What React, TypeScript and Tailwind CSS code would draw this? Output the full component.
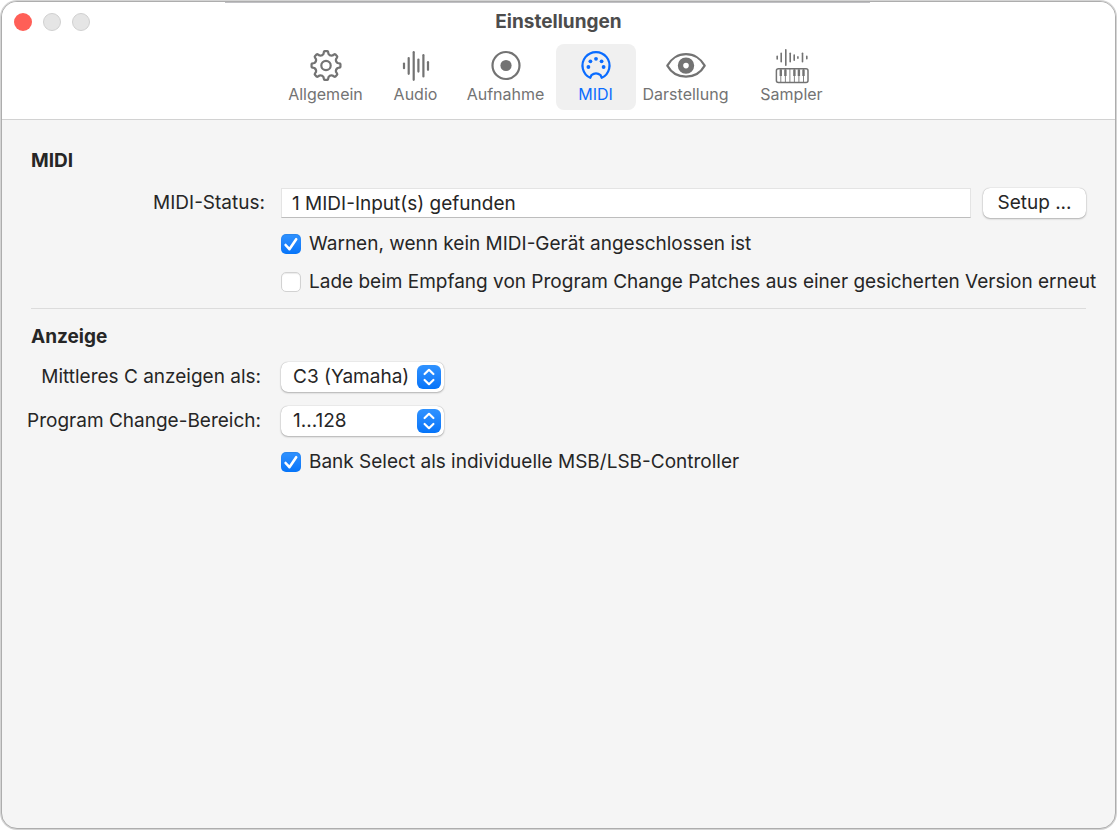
import type { ReactNode } from 'react'

// outline of the gear: eight teeth around (20, 17.5)
function gearPath() {
  const point = (radius: number, deg: number) => {
    const a = ((deg - 90) * Math.PI) / 180
    return `${(20 + radius * Math.cos(a)).toFixed(2)} ${(17.5 + radius * Math.sin(a)).toFixed(2)}`
  }
  let d = ''
  for (let i = 0; i < 8; i++) {
    const deg = i * 45
    d += `${i === 0 ? 'M' : 'L'}${point(11.9, deg - 12)} L${point(13.6, deg - 9)} Q${point(14.5, deg - 8)} ${point(14.5, deg - 5)} `
    d += `L${point(14.5, deg + 5)} Q${point(14.5, deg + 8)} ${point(13.6, deg + 9)} L${point(11.9, deg + 12)} `
    d += `Q${point(10.2, deg + 22.5)} ${point(11.9, deg + 33)} `
  }
  return d + 'Z'
}

const audioBars = [
  [8, 15.6, 20.2],
  [12.7, 10, 25.8],
  [17.7, 4.2, 31.8],
  [22.4, 11.6, 23.6],
  [27.4, 7.2, 28.4],
  [32, 14.2, 21.8],
]

const samplerBars = [
  [5.2, 8.4, 11],
  [9.2, 5.4, 13.8],
  [13.8, 1.8, 17.2],
  [18.2, 5.2, 13.8],
  [22.2, 7, 12.2],
  [25.9, 8.9, 10.2],
  [30.5, 5.2, 13.8],
  [34.8, 8.4, 10.8],
]

function Icon({ children }: { children: ReactNode }) {
  return (
    <svg viewBox="0 0 40 36" className="w-10 h-9" fill="none" stroke="currentColor" strokeWidth="2.2" strokeLinecap="round" strokeLinejoin="round" aria-hidden="true">
      {children}
    </svg>
  )
}

const tabs = [
  {
    label: 'Allgemein',
    icon: (
      <Icon>
        <path d={gearPath()} />
        <circle cx="20" cy="17.5" r="4.7" />
      </Icon>
    ),
  },
  {
    label: 'Audio',
    icon: (
      <Icon>
        {audioBars.map(([x, top, bottom]) => (
          <path key={x} d={`M${x} ${top}V${bottom}`} />
        ))}
      </Icon>
    ),
  },
  {
    label: 'Aufnahme',
    icon: (
      <Icon>
        <circle cx="20" cy="17.5" r="13.5" />
        <circle cx="20" cy="17.5" r="5.6" fill="currentColor" stroke="none" />
      </Icon>
    ),
  },
  {
    label: 'MIDI',
    active: true,
    icon: (
      <Icon>
        <path d="M14.3 29.8A13.5 13.5 0 1 1 25.7 29.8L24.6 27.2Q20 23.4 15.4 27.2Z" />
        <g fill="currentColor" stroke="none">
          <circle cx="12.4" cy="19" r="1.9" />
          <circle cx="14.4" cy="13.3" r="1.9" />
          <circle cx="20" cy="10.8" r="1.9" />
          <circle cx="25.6" cy="13.3" r="1.9" />
          <circle cx="27.6" cy="19" r="1.9" />
        </g>
      </Icon>
    ),
  },
  {
    label: 'Darstellung',
    icon: (
      <Icon>
        <path d="M1.3 17.6C5 10.8 12 6.2 20 6.2S35 10.8 38.7 17.6C35 24.2 28 28.6 20 28.6S5 24.2 1.3 17.6Z" />
        <circle cx="20" cy="17.6" r="5.5" strokeWidth="5.4" />
      </Icon>
    ),
  },
  {
    label: 'Sampler',
    spaced: true,
    icon: (
      <Icon>
        {samplerBars.map(([x, top, bottom]) => (
          <path key={x} d={`M${x} ${top}V${bottom}`} strokeWidth="1.6" />
        ))}
        <rect x="4.4" y="20.8" width="31.6" height="13.6" rx="2" strokeWidth="1.5" />
        <path d="M8.8 21V34M13.4 21V34M17.9 21V34M22.4 21V34M26.9 21V34M31.5 21V34" strokeWidth="0.9" />
        <path d="M8.8 21.5V28M13.4 21.5V28M22.4 21.5V28M26.9 21.5V28M31.5 21.5V28" strokeWidth="2.4" strokeLinecap="butt" />
      </Icon>
    ),
  },
]

function Checkbox({ id, label, checked }: { id: string; label: string; checked?: boolean }) {
  return (
    <div className="flex items-center gap-2">
      <span className="relative flex shrink-0">
        <input
          id={id}
          type="checkbox"
          defaultChecked={checked}
          className="peer appearance-none size-5 rounded-[5px] bg-white border border-[#d2d2d2] shadow-[inset_0_1px_1px_rgba(0,0,0,0.08)] checked:border-0 checked:bg-gradient-to-b checked:from-[#2f92ff] checked:to-[#0474f9]"
        />
        <svg viewBox="0 0 20 20" className="absolute inset-0 size-5 pointer-events-none opacity-0 peer-checked:opacity-100" fill="none" stroke="white" strokeWidth="2.6" strokeLinecap="round" strokeLinejoin="round" aria-hidden="true">
          <path d="M4.6 11L8.4 15.2L15.2 5.2" />
        </svg>
      </span>
      <label htmlFor={id}>{label}</label>
    </div>
  )
}

function Select({ id, options }: { id: string; options: string[] }) {
  return (
    <div className="relative w-[163px]">
      <select id={id} className="appearance-none block w-full h-[30px] pl-3 pr-8 rounded-[7px] bg-white shadow-[0_0_1px_rgba(0,0,0,0.35),0_1px_2px_rgba(0,0,0,0.25)]">
        {options.map((option) => (
          <option key={option}>{option}</option>
        ))}
      </select>
      <svg viewBox="0 0 24 24" className="absolute right-[3px] top-[3px] size-6 pointer-events-none rounded-md bg-gradient-to-b from-[#2f92ff] to-[#0474f9]" fill="none" stroke="white" strokeWidth="2.2" strokeLinecap="round" strokeLinejoin="round" aria-hidden="true">
        <path d="M7.6 9L12 4.8L16.4 9M7.6 15L12 19.2L16.4 15" />
      </svg>
    </div>
  )
}

export default function App() {
  return (
    <div className="min-h-screen flex bg-white font-['Inter',sans-serif] text-[19px] leading-6 text-[#262626]">
      <div className="flex-1 flex flex-col m-px rounded-2xl border border-[#adadad] ring-1 ring-[#d4d4d4] bg-[#f5f5f5] overflow-hidden">
        <header className="bg-white border-b border-[#d2d2d2]">
          <div className="h-px ml-[20%] w-[58%] bg-[#c0c0c4]" />
          <div className="h-[38px] grid grid-cols-[1fr_auto_1fr] items-center px-3">
            <div className="flex gap-[11px]">
              <button aria-label="Schließen" className="size-[18px] rounded-full bg-[#ff5f57]" />
              <button aria-label="Minimieren" className="size-[18px] rounded-full bg-[#e5e5e5] border border-[#d0d0d0]" />
              <button aria-label="Zoomen" className="size-[18px] rounded-full bg-[#e5e5e5] border border-[#d0d0d0]" />
            </div>
            <h1 className="font-bold text-[#4c4c4c]">Einstellungen</h1>
          </div>
          <nav className="flex justify-center gap-[10px] pt-[3px] pb-[9px]">
            {tabs.map((tab) => (
              <button
                key={tab.label}
                className={`w-20 h-[66px] pt-1 flex flex-col items-center rounded-lg text-base leading-5 whitespace-nowrap ${
                  tab.active ? 'bg-[#f0f0f0] text-[#0a6cff]' : 'text-[#737373]'
                } ${tab.spaced ? 'ml-4' : ''}`}
              >
                {tab.icon}
                <span>{tab.label}</span>
              </button>
            ))}
          </nav>
        </header>

        <main className="px-[29px] pt-[29px]">
          <section className="pb-[14px] border-b border-[#dcdcdc]">
            <h2 className="font-bold">MIDI</h2>
            <div className="mt-[15px] grid grid-cols-[234px_minmax(0,1fr)] gap-x-4 gap-y-[14px]">
              <label htmlFor="midi-status" className="self-center text-right">MIDI-Status:</label>
              <div className="flex items-center gap-3">
                <input
                  id="midi-status"
                  readOnly
                  value="1 MIDI-Input(s) gefunden"
                  className="flex-1 min-w-0 h-[30px] px-[10px] bg-white border border-[#e4e4e4] border-b-[#bdbdbd]"
                />
                <button className="w-[103px] h-[30px] rounded-[7px] bg-white shadow-[0_0_1px_rgba(0,0,0,0.35),0_1px_2px_rgba(0,0,0,0.25)]">Setup ...</button>
              </div>
              <div className="col-start-2 flex flex-col gap-[14px] whitespace-nowrap">
                <Checkbox id="warn" label="Warnen, wenn kein MIDI-Gerät angeschlossen ist" checked />
                <Checkbox id="reload" label="Lade beim Empfang von Program Change Patches aus einer gesicherten Version erneut" />
              </div>
            </div>
          </section>

          <section className="pt-4">
            <h2 className="font-bold">Anzeige</h2>
            <div className="mt-[13px] grid grid-cols-[234px_minmax(0,1fr)] gap-x-4 gap-y-[14px] items-center">
              <label htmlFor="middle-c" className="flex justify-end pr-1 whitespace-nowrap">Mittleres C anzeigen als:</label>
              <Select id="middle-c" options={['C3 (Yamaha)', 'C4 (Roland)']} />
              <label htmlFor="program-range" className="flex justify-end pr-1 whitespace-nowrap">Program Change-Bereich:</label>
              <Select id="program-range" options={['1...128', '0...127']} />
              <div className="col-start-2">
                <Checkbox id="bank-select" label="Bank Select als individuelle MSB/LSB-Controller" checked />
              </div>
            </div>
          </section>
        </main>
      </div>
    </div>
  )
}
